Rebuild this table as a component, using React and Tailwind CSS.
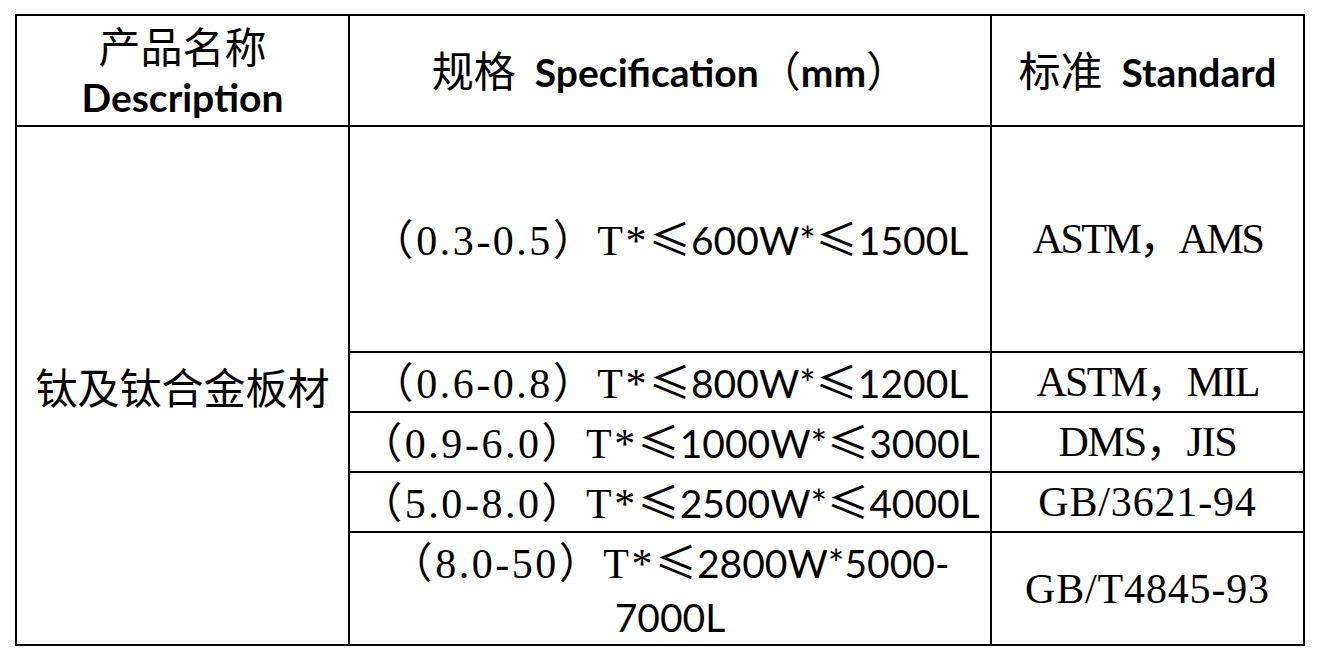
import React from 'react';

const cjk = "font-['Noto_Sans_CJK_SC',sans-serif]";
const song = "font-['Liberation_Serif','Noto_Sans_CJK_SC',serif] tracking-[0.06em]";
const cal = "font-['Lato','Noto_Sans_CJK_SC',sans-serif] text-[39px]";

const rows = [
  { range: '（0.3-0.5）', w: '600', l: '1500', std: 'ASTM，AMS', h: 'h-[226px]', t: 'tracking-[-0.06em]' },
  { range: '（0.6-0.8）', w: '800', l: '1200', std: 'ASTM，MIL', h: 'h-[60px]', t: 'tracking-[-0.04em]' },
  { range: '（0.9-6.0）', w: '1000', l: '3000', std: 'DMS，JIS', h: 'h-[60px]', t: 'tracking-[-0.03em]' },
  { range: '（5.0-8.0）', w: '2500', l: '4000', std: 'GB/3621-94', h: 'h-[60px]', t: 'tracking-[0.02em]' },
];

function Le() {
  return <span className={cjk}>≤</span>;
}

function Spec({ range, w, l }) {
  return (
    <span className="whitespace-nowrap">
      <span className={song}>{range}T*</span>
      <Le />
      <span className={cal}>{w}W*</span>
      <Le />
      <span className={cal}>{l}L</span>
    </span>
  );
}

export default function App() {
  const cell = 'border-2 border-black text-center align-middle p-0';
  return (
    <div className="bg-white min-h-[660px] pl-[15px] pt-[14px] text-black">
      <table className="border-collapse table-fixed w-[1288px] text-[42px] leading-[40px]">
        <colgroup>
          <col className="w-[333px]" />
          <col className="w-[642px]" />
          <col className="w-[313px]" />
        </colgroup>
        <tbody>
          <tr className="h-[111px]">
            <td className={cell}>
              <div className={`${cjk} leading-[52px]`}>产品名称</div>
              <div className={`${cal} font-bold leading-[52px]`}>Description</div>
            </td>
            <td className={`${cell} whitespace-pre`}>
              <span className={cjk}>规格</span>
              <span className={`${cal} font-bold`}>{'  '}Specification</span>
              <span className={cjk}>（</span>
              <span className={`${cal} font-bold`}>mm</span>
              <span className={cjk}>）</span>
            </td>
            <td className={`${cell} whitespace-pre`}>
              <span className={cjk}>标准</span>
              <span className={`${cal} font-bold`}>{'  '}Standard</span>
            </td>
          </tr>
          {rows.map((r, i) => (
            <tr key={i} className={r.h}>
              {i === 0 && (
                <td rowSpan={5} className={`${cell} ${cjk}`}>
                  钛及钛合金板材
                </td>
              )}
              <td className={cell}>
                <Spec range={r.range} w={r.w} l={r.l} />
              </td>
              <td className={`${cell} font-['Liberation_Serif','Noto_Sans_CJK_SC',serif] ${r.t}`}>
                {r.std}
              </td>
            </tr>
          ))}
          <tr className="h-[111px]">
            <td className={`${cell} leading-[53px]`}>
              <div>
                <span className={song}>（8.0-50）T*</span>
                <Le />
                <span className={cal}>2800W*5000-</span>
              </div>
              <div className={cal}>7000L</div>
            </td>
            <td className={`${cell} font-['Liberation_Serif','Noto_Sans_CJK_SC',serif] tracking-[0.02em]`}>
              GB/T4845-93
            </td>
          </tr>
        </tbody>
      </table>
    </div>
  );
}
